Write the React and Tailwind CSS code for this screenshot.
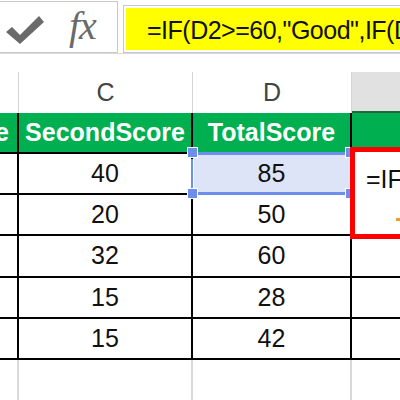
import React from 'react';

const rows = [
    { c: '40', d: '85', sel: true },
    { c: '20', d: '50' },
    { c: '32', d: '60', h: 'h-[42px]' },
    { c: '15', d: '28' },
    { c: '15', d: '42' },
];

const CheckIcon = () => (
    <svg width="40" height="34" viewBox="0 0 40 34">
        <path d="M1 19 L7 14 L15 22 L34 3 L39 9 L15 31 Z" fill="#6a6a6a" />
    </svg>
);

const App = () => {
    return (
        <div className="w-[400px] h-[400px] overflow-hidden bg-white relative font-['Liberation_Sans',Arial,sans-serif] text-[25px] text-[#111]">
            {/* formula bar */}
            <div className="flex h-[54px] border-b border-[#d9d9d9]">
                <div className="w-[120px] shrink-0 ml-[-2px] mt-[1px] h-[52px] border border-[#c8c8c8] flex items-center">
                    <div className="ml-[6px] mt-[6px]"><CheckIcon /></div>
                    <span className="ml-[24px] mt-[-2px] font-['Liberation_Serif',serif] italic text-[40px] text-[#6a6a6a] tracking-[-1px]">fx</span>
                </div>
                <div className="flex-1 min-w-0 ml-[5px] mt-[5px] h-[48px] border border-[#c8c8c8] p-[2px] pr-0 border-r-0">
                    <div className="h-full bg-[#ffff00] flex items-center pl-[21px] pt-[3px] whitespace-nowrap overflow-hidden text-[25px] tracking-[-0.5px]">
                        =IF(D2&gt;=60,"Good",IF(D2&gt;=40,"Average","Poor"))
                    </div>
                </div>
            </div>

            <div className="h-[18px]" />

            {/* column header row */}
            <div className="grid grid-cols-[19px_174px_159px_1fr] h-[41px] text-[#444]">
                <div className="border-r border-[#d4d4d4]" />
                <div className="border-r border-[#d4d4d4] flex items-center justify-center">C</div>
                <div className="border-r border-[#d4d4d4] flex items-center justify-center">D</div>
                <div className="bg-[#e1e1e1] border-b-2 border-[#1e6b41]" />
            </div>

            {/* green title row */}
            <div className="grid grid-cols-[19px_174px_159px_1fr] h-[41px] bg-[#00b050] text-white font-bold border-b-2 border-black">
                <div className="border-r-2 border-black overflow-hidden flex justify-end items-center">
                    <span className="pr-[8px] whitespace-nowrap">FirstScore</span>
                </div>
                <div className="border-r-2 border-black flex items-center justify-center">SecondScore</div>
                <div className="border-r-2 border-black flex items-center justify-center">TotalScore</div>
                <div />
            </div>

            {/* data rows */}
            {rows.map((r, i) => (
                <div key={i} className={`grid grid-cols-[19px_174px_159px_1fr] ${r.h || 'h-[41px]'} border-b-2 border-black`}>
                    <div className="border-r-2 border-black" />
                    <div className="border-r-2 border-black flex items-center justify-center">{r.c}</div>
                    <div className={`border-r-2 border-black flex items-center justify-center ${r.sel ? 'bg-[#dde4f8]' : ''}`}>{r.d}</div>
                    <div />
                </div>
            ))}

            {/* empty row gridlines */}
            <div className="grid grid-cols-[19px_174px_159px_1fr] h-[41px]">
                <div className="border-r-2 border-[#d9d9d9]" />
                <div className="border-r-2 border-[#d9d9d9]" />
                <div className="border-r-2 border-[#d9d9d9]" />
                <div />
            </div>

            {/* selection on D2 */}
            <div className="absolute left-[192px] top-[152px] w-[158px] h-[3px] bg-[#6d8eec]" />
            <div className="absolute left-[192px] top-[192px] w-[158px] h-[3px] bg-[#6d8eec]" />
            <div className="absolute left-[190px] top-[159px] w-[4px] h-[30px] bg-[#6d8eec] border-x border-white" />
            <div className="absolute left-[187px] top-[147px] w-[11px] h-[11px] bg-[#6d8eec] border border-white" />
            <div className="absolute left-[187px] top-[188px] w-[11px] h-[11px] bg-[#6d8eec] border border-white" />
            <div className="absolute left-[345px] top-[147px] w-[11px] h-[11px] bg-[#6d8eec] border border-white" />
            <div className="absolute left-[345px] top-[188px] w-[11px] h-[11px] bg-[#6d8eec] border border-white" />

            {/* red highlight box */}
            <div className="absolute left-[350px] top-[147px] w-[70px] h-[92px] border-[5px] border-[#ff0000] bg-white overflow-hidden">
                <div className="pl-[11px] pt-[9px] whitespace-nowrap">=IF(D2&gt;=60,</div>
                <div className="absolute left-[41px] top-[66px] w-[4px] h-[3px] bg-[#f0a030]" />
            </div>
        </div>
    );
};

export default App;
